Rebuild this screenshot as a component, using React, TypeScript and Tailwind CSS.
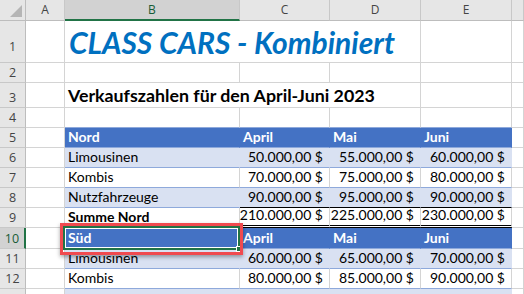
import type { ReactNode } from "react";

// Excel-style sheet: CLASS CARS quarterly sales, row 10 (Süd) selected.

const font = { fontFamily: "Lato, 'Noto Sans', sans-serif" };

function ColHead({ label, active }: { label?: string; active?: boolean }) {
  return (
    <div
      className={`flex items-center justify-center border-r border-b border-r-[#c8c8c8] text-[12px] ${
        active
          ? "bg-[#d2d2d2] border-b-2 border-b-[#217346] text-[#185c37]"
          : "bg-[#e6e6e6] border-b-[#bdbdbd] text-[#444]"
      }`}
      style={{ fontFamily: "'Open Sans', sans-serif" }}
    >
      {label}
    </div>
  );
}

function RowHead({ n, active, tall }: { n?: number; active?: boolean; tall?: boolean }) {
  return (
    <div
      className={`flex items-end justify-center border-b border-b-[#c8c8c8] text-[12.5px] leading-[16px] ${
        tall ? "pb-[7px]" : "pb-[1px]"
      } ${
        active
          ? "bg-[#d2d2d2] border-r-2 border-r-[#217346] text-[#185c37]"
          : "bg-[#e6e6e6] border-r border-r-[#bdbdbd] text-[#444]"
      }`}
      style={{ fontFamily: "'Open Sans', sans-serif" }}
    >
      {n}
    </div>
  );
}

function Cell({ className = "", children }: { className?: string; children?: ReactNode }) {
  return (
    <div
      className={`flex items-end whitespace-nowrap border-r border-b pb-[1px] text-[14px] leading-[18px] text-black ${className}`}
    >
      {children}
    </div>
  );
}

// plain grid cell
const g = "border-r-[#d4d4d4] border-b-[#d4d4d4]";
const hdr = "bg-[#4472c4] border-r-[#4472c4] border-b-[#8ea9db] font-bold text-white px-[3px]";
const band = "bg-[#d9e1f2] border-r-[#d9e1f2] border-b-[#8ea9db]";
const white = "bg-white border-r-[#d4d4d4] border-b-[#8ea9db]";
const num = "justify-end pr-[6px] text-[13.3px]";

function HeaderRow({ first }: { first: string }) {
  return (
    <>
      <Cell className={`${hdr}`}>{first}</Cell>
      <Cell className={`${hdr}`}>April</Cell>
      <Cell className={`${hdr}`}>Mai</Cell>
      <Cell className={`${hdr} border-r-[#8ea9db]`}>Juni</Cell>
    </>
  );
}

function DataRow({ label, vals, banded }: { label?: string; vals?: string[]; banded?: boolean }) {
  const s = banded ? band : white;
  return (
    <>
      <Cell className={`${s} px-[3px]`}>{label}</Cell>
      <Cell className={`${s} ${num}`}>{vals?.[0]}</Cell>
      <Cell className={`${s} ${num}`}>{vals?.[1]}</Cell>
      <Cell className={`${s} ${num} border-r-[#8ea9db]`}>{vals?.[2]}</Cell>
    </>
  );
}

export default function App() {
  return (
    <div className="relative h-[294px] w-[524px] overflow-hidden bg-white" style={font}>
      <div className="grid grid-cols-[26px_39px_175px_90px_91px_91px_1fr] grid-rows-[21px_42px_20px_25px_20px_20px_20px_20px_20px_20px_21px_20px_20px_20px]">
        {/* column headers */}
        <div className="relative border-r border-b border-r-[#bdbdbd] border-b-[#bdbdbd] bg-[#e6e6e6]">
          <svg className="absolute left-[10px] top-[5px]" width="12" height="12" viewBox="0 0 12 12">
            <path d="M12 0 L12 12 L0 12 Z" fill="#b5b5b5" />
          </svg>
        </div>
        <ColHead label="A" />
        <ColHead label="B" active />
        <ColHead label="C" />
        <ColHead label="D" />
        <ColHead label="E" />
        <ColHead />

        {/* row 1 */}
        <RowHead n={1} tall />
        <Cell className={g} />
        <div className="col-span-3 flex items-end whitespace-nowrap border-r border-b border-r-[#d4d4d4] border-b-[#d4d4d4] px-[4px] pb-[2px]">
          <span className="text-[30px] font-bold italic leading-[36px] text-[#0070c0]">
            CLASS CARS - Kombiniert
          </span>
        </div>
        <Cell className={g} />
        <Cell className={g} />

        {/* row 2 */}
        <RowHead n={2} />
        <Cell className={g} />
        <Cell className={g} />
        <Cell className={g} />
        <Cell className={g} />
        <Cell className={g} />
        <Cell className={g} />

        {/* row 3 */}
        <RowHead n={3} />
        <Cell className={g} />
        <div className="col-span-3 flex items-end whitespace-nowrap border-r border-b border-r-[#d4d4d4] border-b-[#d4d4d4] px-[3px] pb-[1px]">
          <span className="text-[17.8px] font-bold leading-[22px] text-black">
            Verkaufszahlen für den April-Juni 2023
          </span>
        </div>
        <Cell className={g} />
        <Cell className={g} />

        {/* row 4 */}
        <RowHead n={4} />
        <Cell className={`${g} border-r-[#8ea9db]`} />
        <Cell className="border-r-[#d4d4d4] border-b-[#8ea9db]" />
        <Cell className="border-r-[#d4d4d4] border-b-[#8ea9db]" />
        <Cell className="border-r-[#d4d4d4] border-b-[#8ea9db]" />
        <Cell className="border-r-[#d4d4d4] border-b-[#8ea9db]" />
        <Cell className={g} />

        {/* row 5 */}
        <RowHead n={5} />
        <Cell className={`${g} border-r-[#8ea9db]`} />
        <HeaderRow first="Nord" />
        <Cell className={g} />

        {/* row 6 */}
        <RowHead n={6} />
        <Cell className={`${g} border-r-[#8ea9db]`} />
        <DataRow label="Limousinen" vals={["50.000,00 $", "55.000,00 $", "60.000,00 $"]} banded />
        <Cell className={g} />

        {/* row 7 */}
        <RowHead n={7} />
        <Cell className={`${g} border-r-[#8ea9db]`} />
        <DataRow label="Kombis" vals={["70.000,00 $", "75.000,00 $", "80.000,00 $"]} />
        <Cell className={g} />

        {/* row 8 */}
        <RowHead n={8} />
        <Cell className={`${g} border-r-[#8ea9db]`} />
        <Cell className={`${band} px-[3px]`}>Nutzfahrzeuge</Cell>
        <Cell className={`${band} ${num} border-b-black`}>90.000,00 $</Cell>
        <Cell className={`${band} ${num} border-b-black`}>95.000,00 $</Cell>
        <Cell className={`${band} ${num} border-b-black border-r-[#8ea9db]`}>90.000,00 $</Cell>
        <Cell className={g} />

        {/* row 9 */}
        <RowHead n={9} />
        <Cell className={`${g} border-r-[#8ea9db]`} />
        <Cell className={`${white} px-[3px] font-bold`}>Summe Nord</Cell>
        <Cell className={`${white} ${num} border-b-[3px] border-double border-b-black`}>210.000,00 $</Cell>
        <Cell className={`${white} ${num} border-b-[3px] border-double border-b-black`}>225.000,00 $</Cell>
        <Cell className={`${white} ${num} border-b-[3px] border-double border-b-black border-r-[#8ea9db]`}>
          230.000,00 $
        </Cell>
        <Cell className={g} />

        {/* row 10 */}
        <RowHead n={10} active />
        <Cell className={`${g} border-r-[#8ea9db]`} />
        <HeaderRow first="Süd" />
        <Cell className={g} />

        {/* row 11 */}
        <RowHead n={11} />
        <Cell className={`${g} border-r-[#8ea9db]`} />
        <DataRow label="Limousinen" vals={["60.000,00 $", "65.000,00 $", "70.000,00 $"]} banded />
        <Cell className={g} />

        {/* row 12 */}
        <RowHead n={12} />
        <Cell className={`${g} border-r-[#8ea9db]`} />
        <DataRow label="Kombis" vals={["80.000,00 $", "85.000,00 $", "90.000,00 $"]} />
        <Cell className={g} />

        {/* row 13, cut off by the window */}
        <RowHead />
        <Cell className={`${g} border-r-[#8ea9db]`} />
        <DataRow banded />
        <Cell className={g} />
      </div>

      {/* active cell B10 */}
      <div className="absolute left-[63px] top-[226px] h-[24px] w-[177px] border-2 border-[#217346]">
        <div className="h-full w-full border border-white" />
      </div>
      <div className="absolute left-[236px] top-[246px] h-[6px] w-[6px] border border-white bg-[#217346]" />

      {/* annotation */}
      <div className="absolute left-[60px] top-[223px] h-[32px] w-[183px] border-[3px] border-[#f04a4f] shadow-[0_2px_4px_rgba(0,0,0,0.35)]" />
    </div>
  );
}
